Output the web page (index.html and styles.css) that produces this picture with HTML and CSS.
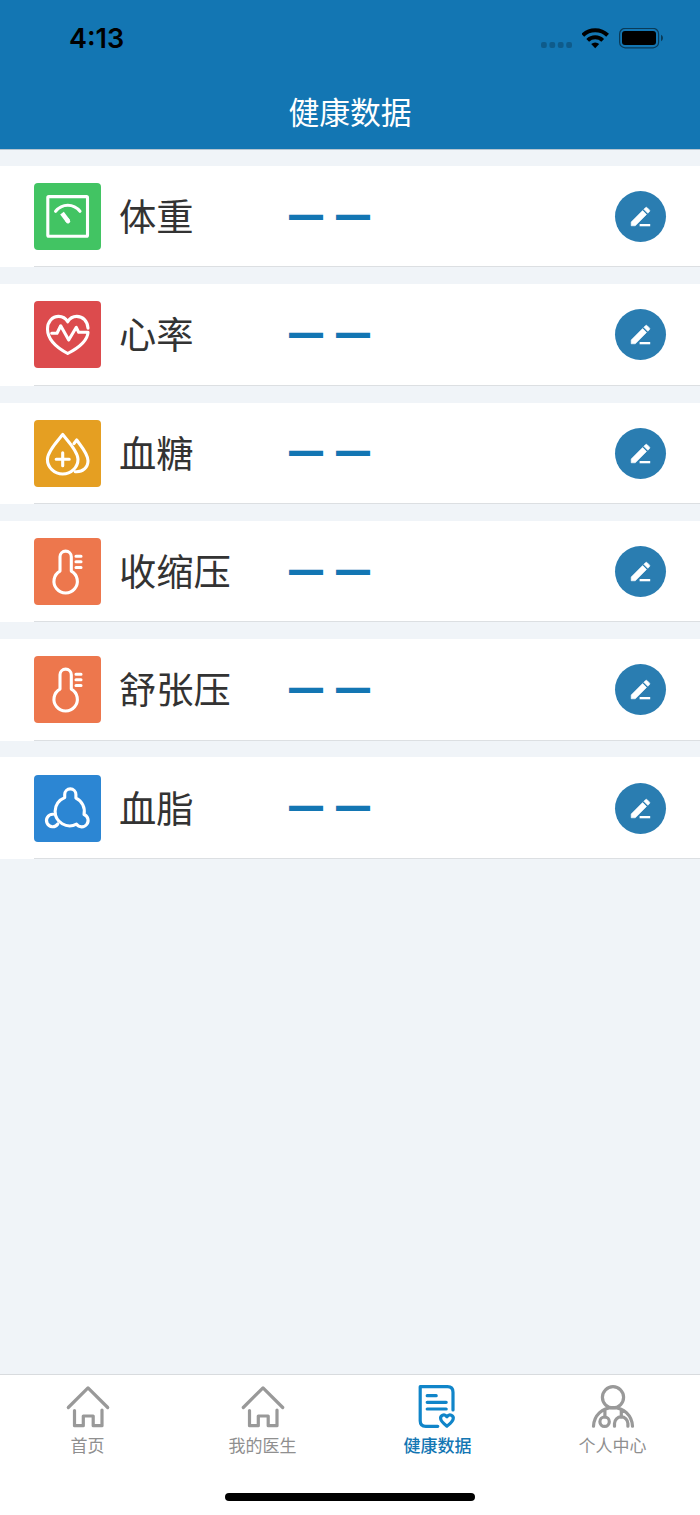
FILE: index.html
```
<!DOCTYPE html>
<html lang="zh-CN">
<head>
    <meta charset="UTF-8">
    <meta name="viewport" content="width=device-width, initial-scale=1.0">
    <title>健康数据</title>
    <link rel="stylesheet" href="styles.css">
</head>
<body>
    <!-- 图标 -->
    <svg class="icon-defs" width="0" height="0">
        <symbol id="icon-edit" viewBox="0 0 51 51">
            <path d="M16.200 34.800v-3.800l11.400-11.400 3.900 3.900L20.300 34.800zM28.800 18.300l1.600-1.600a1.300 1.300 0 0 1 1.800 0l2.200 2.200a1.300 1.300 0 0 1 0 1.800l-1.600 1.600z" fill="#fff" stroke="#fff" stroke-width="0.6" stroke-linejoin="round"/>
            <path d="M24.600 33h10.600v2.300H24.600z" fill="#fff"/>
        </symbol>
        <symbol id="icon-thermo" viewBox="0 0 67 67">
            <path d="M26 33.100V18.800a5.650 5.650 0 0 1 11.300 0v14.300a11.700 11.700 0 1 1-11.300 0z"/>
            <path d="M42 18.200h5M42 23.800h5M42 29.500h5"/>
        </symbol>
        <symbol id="icon-home" viewBox="0 0 44 44">
            <path d="M2.300 22.500L22 2.900l19.700 19.600M8.500 25.500v15.200h8.800V31h9.900v9.700H36V25"/>
        </symbol>
    </svg>

    <!-- 顶部 -->
    <header class="header">
        <div class="status-bar">
            <span class="time">4:13</span>
            <div class="status-icons">
                <svg width="32" height="22" viewBox="0 0 32 22" fill="#000" opacity="0.22">
                    <rect x="0" y="14" width="5.8" height="6" rx="2"/>
                    <rect x="8.4" y="14" width="5.8" height="6" rx="2"/>
                    <rect x="16.8" y="14" width="5.8" height="6" rx="2"/>
                    <rect x="25.2" y="14" width="5.8" height="6" rx="2"/>
                </svg>
                <svg width="28" height="22" viewBox="0.8 0.8 28 22" fill="none" stroke="#000" stroke-width="4">
                    <path d="M1.600 8a17.800 17.800 0 0 1 24.800 0M6.500 13.200a10.800 10.800 0 0 1 15 0"/>
                    <path d="M14 21l-4-4.200a6 6 0 0 1 8 0z" fill="#000" stroke="none"/>
                </svg>
                <svg width="45" height="22" viewBox="0 0.6 45 22">
                    <rect x="0.6" y="1" width="39" height="19.4" rx="5.5" fill="none" stroke="#000" stroke-width="1.2" opacity="0.5"/>
                    <rect x="3" y="3.700" width="34" height="14" rx="3"/>
                    <path d="M42 7.300v6.600q2-1 2-3.300t-2-3.300z" opacity="0.5"/>
                </svg>
            </div>
        </div>
        <h1 class="title">健康数据</h1>
    </header>

    <!-- 健康数据列表 -->
    <main class="list">
        <div class="item">
            <svg class="item-icon green" viewBox="0 0 67 67">
                <rect x="13.800" y="13.600" width="39.700" height="39.700" rx="1"/>
                <path d="M21.600 28.300Q26.500 22.200 33.800 22.200T46 28.300"/>
                <path d="M28 30.200l6 8" stroke-width="4.500" stroke-linecap="butt"/>
                <path d="M33.500 37.500l.5.700" stroke-width="4.500"/>
            </svg>
            <span class="item-name">体重</span>
            <span class="item-value">— —</span>
            <button class="edit-btn"><svg><use href="#icon-edit"/></svg></button>
        </div>
        <div class="item">
            <svg class="item-icon red" viewBox="0 0 67 67">
                <path d="M54 27.200C53.500 20 49 15.400 42.700 15.400c-4 0-7 2-9 5.400-2-3.400-5-5.400-9-5.400-6.500 0-11.200 5.300-11.200 12.600C13.500 38.500 23 46.800 33.700 52.500 44.500 46.800 53.500 39.500 54 31.300h-9.300l-2.400-5L34.700 39l-8-14.200-3.700 7.500h-5.300"/>
            </svg>
            <span class="item-name">心率</span>
            <span class="item-value">— —</span>
            <button class="edit-btn"><svg><use href="#icon-edit"/></svg></button>
        </div>
        <div class="item">
            <svg class="item-icon yellow" viewBox="0 0 67 67">
                <path d="M28.700 14.500C24 20.500 13.400 31 13.400 39.300a15.300 14.700 0 0 0 30.600 0C44 31 33.400 20.500 28.700 14.500z"/>
                <path d="M28.700 32.800v13M22.200 39.300h13M40 23.500l2.700-3.500C46.500 25.500 54 33.500 54 40.700c0 6.500-5 11.700-12.800 11"/>
            </svg>
            <span class="item-name">血糖</span>
            <span class="item-value">— —</span>
            <button class="edit-btn"><svg><use href="#icon-edit"/></svg></button>
        </div>
        <div class="item">
            <svg class="item-icon orange"><use href="#icon-thermo"/></svg>
            <span class="item-name">收缩压</span>
            <span class="item-value">— —</span>
            <button class="edit-btn"><svg><use href="#icon-edit"/></svg></button>
        </div>
        <div class="item">
            <svg class="item-icon orange"><use href="#icon-thermo"/></svg>
            <span class="item-name">舒张压</span>
            <span class="item-value">— —</span>
            <button class="edit-btn"><svg><use href="#icon-edit"/></svg></button>
        </div>
        <div class="item">
            <svg class="item-icon blue" viewBox="0 0 67 67">
                <path d="M30.700 22.600v-3.100a5.600 5.600 0 0 1 11.200 0v3.600A14.600 14.600 0 0 1 50 39.500a6.400 6.400 0 1 1-7.500 9.700A14.600 14.600 0 0 1 21.100 36.300A14.600 14.600 0 0 1 30.700 22.600z"/>
                <path d="M19 39.300a6.200 6.200 0 1 0 4.800 9.700"/>
            </svg>
            <span class="item-name">血脂</span>
            <span class="item-value">— —</span>
            <button class="edit-btn"><svg><use href="#icon-edit"/></svg></button>
        </div>
    </main>

    <!-- 底部导航 -->
    <footer class="footer">
        <nav class="tabs">
            <a class="tab">
                <svg><use href="#icon-home"/></svg>
                <span>首页</span>
            </a>
            <a class="tab">
                <svg><use href="#icon-home"/></svg>
                <span>我的医生</span>
            </a>
            <a class="tab active">
                <svg viewBox="0 0 44 44">
                    <path d="M37 25V7.200q0-5.500-5.500-5.500H4.200v34q0 5.600 5.600 5.600h12M11.200 10.700h9M11.200 17.300h19M11.200 24h19"/>
                    <path d="M30.900 31.800c-2.500-3.500-7-1.500-6.200 2.200.6 2.800 3.500 5 6.200 7.200 2.700-2.200 5.700-4.400 6.300-7.200.8-3.700-3.800-5.700-6.300-2.200z"/>
                </svg>
                <span>健康数据</span>
            </a>
            <a class="tab">
                <svg viewBox="0 0 44 44">
                    <circle cx="22" cy="12.300" r="10.600"/>
                    <path d="M2.500 41.200C3 30.500 11.100 22.600 22 22.600S41 30.500 41.500 41.200M13.900 25v7M30.300 25v7"/>
                    <circle cx="13.600" cy="36.700" r="4.700"/>
                    <path d="M23.500 41.200V38.500a6.700 6.700 0 0 1 13.400 0v2.700"/>
                </svg>
                <span>个人中心</span>
            </a>
        </nav>
        <div class="home-bar"></div>
    </footer>
</body>
</html>
```

FILE: styles.css
```
* {
    box-sizing: border-box;
}

body {
    margin: 0;
    height: 1515px;
    display: flex;
    flex-direction: column;
    background-color: #f0f4f8;
    font-family: "Noto Sans CJK SC", sans-serif;
    color: #333;
}

.icon-defs {
    display: block;
    flex: none;
}

.header {
    height: 150px;
    background-color: #1376b3;
    border-bottom: 1px solid #b5c5d1;
}

.status-bar {
    height: 77px;
    padding: 0 36px 0 69px;
    display: flex;
    justify-content: space-between;
    align-items: center;
}

.time {
    font-family: Inter, sans-serif;
    font-size: 27px;
    font-weight: 600;
    color: #000;
}

.status-icons {
    display: flex;
    gap: 9px;
}

.status-icons svg {
    display: block;
}

.title {
    margin: 0;
    font-size: 30.8px;
    line-height: 67px;
    font-weight: 400;
    text-align: center;
    color: #fff;
}

.list {
    flex: 1;
    padding-top: 16px;
    display: flex;
    flex-direction: column;
    gap: 16.9px;
}

.item {
    height: 101.4px;
    padding: 0 34px;
    display: flex;
    align-items: center;
    background-color: #fff;
    background-image: linear-gradient(#dcdfe2, #dcdfe2);
    background-size: 100% 1px;
    background-position: 34px 100%;
    background-repeat: no-repeat;
}

.item-icon {
    width: 67px;
    height: 67px;
    margin-right: 18px;
    border-radius: 4px;
    fill: none;
    stroke: #fff;
    stroke-width: 3.1;
    stroke-linecap: round;
    stroke-linejoin: round;
}

.green {
    background-color: #42c463;
}

.red {
    background-color: #dc4b4d;
}

.yellow {
    background-color: #e59f22;
}

.orange {
    background-color: #ed774d;
}

.blue {
    background-color: #2c86d3;
}

.item-name {
    width: 171px;
    padding-bottom: 3px;
    font-size: 37.3px;
    font-weight: 400;
    line-height: 60px;
}

.item-value {
    flex: 1;
    padding-bottom: 3px;
    font-family: "Liberation Sans", sans-serif;
    font-size: 32px;
    font-weight: bold;
    word-spacing: 6px;
    color: #1376b3;
    -webkit-text-stroke: 2px #1376b3;
}

.edit-btn {
    width: 51px;
    height: 51px;
    padding: 0;
    border: none;
    border-radius: 50%;
    background-color: #2a7db1;
    cursor: pointer;
}

.edit-btn svg {
    display: block;
    width: 51px;
    height: 51px;
}

.footer {
    height: 141px;
    border-top: 1px solid #d8dbde;
    background-color: #fff;
}

.tabs {
    display: flex;
    height: 118px;
    padding-top: 10px;
}

.tab {
    flex: 1;
    display: flex;
    flex-direction: column;
    align-items: center;
    font-size: 17px;
    line-height: 30px;
    color: #8f8f8f;
}

.tab svg {
    width: 44px;
    height: 44px;
    margin-bottom: 1px;
    fill: none;
    stroke: #999;
    stroke-width: 3.2;
    stroke-linecap: round;
    stroke-linejoin: round;
}

.tab.active {
    color: #1376b3;
    font-weight: 500;
}

.tab.active svg {
    stroke: #1085c9;
}

.home-bar {
    width: 250px;
    height: 8px;
    margin: 0 auto;
    border-radius: 4px;
    background-color: #000;
}
```
